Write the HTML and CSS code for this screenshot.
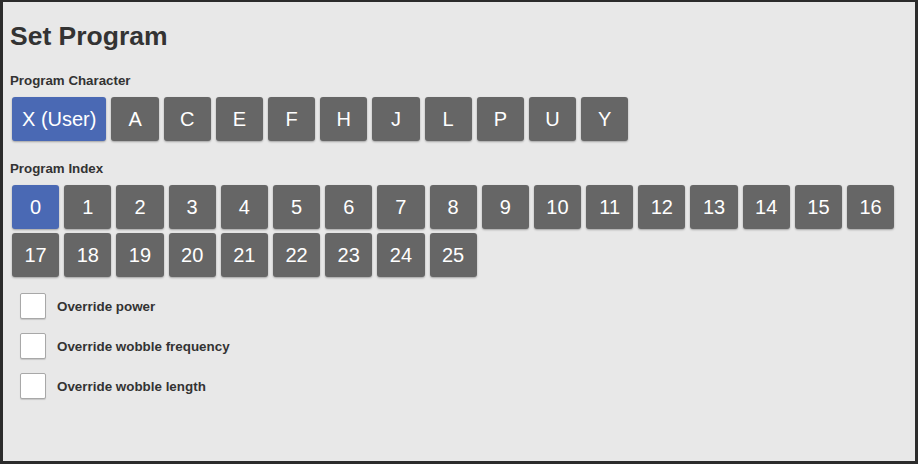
FILE: index.html
```html
<!DOCTYPE html>
<html>
<head>
<meta charset="utf-8">
<link rel="stylesheet" href="styles.css">
</head>
<body>
<div class="panel">
  <h1 class="title">Set Program</h1>
  <div class="label">Program Character</div>
  <div class="btns">
    <button class="btn active">X (User)</button>
    <button class="btn">A</button>
    <button class="btn">C</button>
    <button class="btn">E</button>
    <button class="btn">F</button>
    <button class="btn">H</button>
    <button class="btn">J</button>
    <button class="btn">L</button>
    <button class="btn">P</button>
    <button class="btn">U</button>
    <button class="btn">Y</button>
  </div>
  <div class="label label2">Program Index</div>
  <div class="btns">
    <button class="btn active">0</button>
    <button class="btn">1</button>
    <button class="btn">2</button>
    <button class="btn">3</button>
    <button class="btn">4</button>
    <button class="btn">5</button>
    <button class="btn">6</button>
    <button class="btn">7</button>
    <button class="btn">8</button>
    <button class="btn">9</button>
    <button class="btn">10</button>
    <button class="btn">11</button>
    <button class="btn">12</button>
    <button class="btn">13</button>
    <button class="btn">14</button>
    <button class="btn">15</button>
    <button class="btn">16</button>
    <button class="btn">17</button>
    <button class="btn">18</button>
    <button class="btn">19</button>
    <button class="btn">20</button>
    <button class="btn">21</button>
    <button class="btn">22</button>
    <button class="btn">23</button>
    <button class="btn">24</button>
    <button class="btn">25</button>
  </div>
  <div class="checks">
    <label class="check"><span class="box"></span><span class="ctext">Override power</span></label>
    <label class="check"><span class="box"></span><span class="ctext">Override wobble frequency</span></label>
    <label class="check"><span class="box"></span><span class="ctext">Override wobble length</span></label>
  </div>
</div>
</body>
</html>
```
FILE: styles.css
```css
html, body {
  margin: 0;
  padding: 0;
  background: #2b2b2b;
  font-family: "Liberation Sans", Arial, sans-serif;
}
.panel {
  box-sizing: border-box;
  margin: 2px 3px 0 3px;
  height: 459px;
  background: #e8e8e8;
  padding: 19px 4px 0 7px;
}
.title {
  margin: 0;
  font-size: 26.5px;
  line-height: 30px;
  font-weight: bold;
  color: #333;
}
.label {
  margin-top: 22px;
  font-size: 13.3px;
  line-height: 15px;
  font-weight: bold;
  color: #333;
}
.label2 {
  margin-top: 20px;
}
.btns {
  margin-top: 9px;
  margin-left: 2px;
  display: flex;
  flex-wrap: wrap;
  gap: 4px 5px;
}
.btn {
  box-sizing: border-box;
  height: 44px;
  min-width: 47.2px;
  padding: 0 10px;
  border: none;
  border-radius: 3px;
  background: #666666;
  color: #fff;
  font-family: "Liberation Sans", Arial, sans-serif;
  font-size: 20px;
  box-shadow: 0 1px 2px rgba(0,0,0,0.3);
}
.btn.active {
  background: #4a69b4;
}
.checks {
  margin-top: 16px;
  padding-left: 10px;
  display: flex;
  flex-direction: column;
  gap: 14px;
}
.check {
  display: flex;
  align-items: center;
  gap: 11px;
}
.box {
  box-sizing: border-box;
  width: 26px;
  height: 26px;
  background: #fff;
  border: 1px solid #a8a8a8;
  border-radius: 2px;
  box-shadow: 0 1px 1px rgba(0,0,0,0.15);
}
.ctext {
  font-size: 13.4px;
  line-height: 15px;
  font-weight: bold;
  color: #333;
}
```
